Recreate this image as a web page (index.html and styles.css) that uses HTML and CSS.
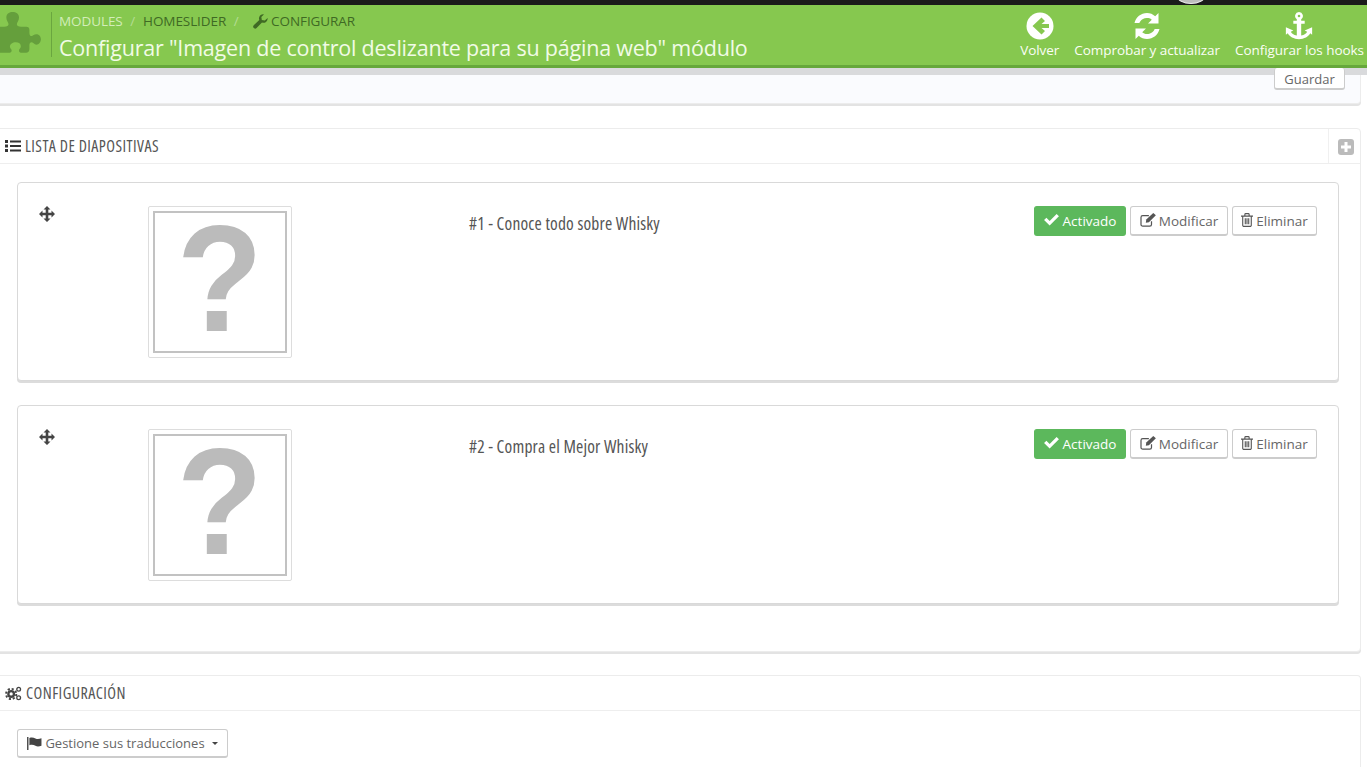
FILE: index.html
```html
<!DOCTYPE html>
<html lang="es">
<head>
<meta charset="utf-8">
<title>Configurar módulo</title>
<link rel="stylesheet" href="styles.css">
</head>
<body>
<div class="topbar"><span class="avatar"></span></div>
<header class="head">
  <div class="puzzle">
    <svg viewBox="0 0 42 44" width="44" height="46"><path fill="#659f3c" d="M-4 14H6C10 14 11 12 9 9 6 3 10 0 14 0s8 3 5 9c-2 3-1 5 3 5h5c2 0 3 1 3 3v3c0 3 2 4 4 2 3-2 7 0 7 4s-4 7-7 4c-2-2-4-1-4 2v3c0 3-1 4-4 4h-3c-3 0-4-2-2-4 2-3 0-6-4-6s-7 3-5 6c2 2 1 4-2 4H-4Z"/></svg>
  </div>
  <div class="titles">
    <div class="crumbs"><span class="light">MODULES</span><span class="sep">/</span><span>HOMESLIDER</span><span class="sep">/</span>
      <svg class="wrench" viewBox="0 0 16 16" width="15" height="15"><path fill="#3f6a24" d="M15.6 4.2c.3 2.3-1 4.3-3 5-1 .4-2.100.3-3-.1L3.800 15a2 2 0 0 1-2.800 0l-.2-.2a2 2 0 0 1 0-2.800L6.700 6.300C6.300 5.300 6.200 4.200 6.700 3.200 7.400 1.200 9.400 0 11.600.4L8.900 3.100l.5 3.200 3.200.5Z"/></svg>
      <span class="conf">CONFIGURAR</span></div>
    <h1>Configurar "Imagen de control deslizante para su página web" módulo</h1>
  </div>
  <nav class="actions">
    <a class="act act-back">
      <svg viewBox="0 0 28 28" width="28" height="28"><circle cx="14" cy="14" r="13.500" fill="#fff"/><path fill="#86c84f" d="M15.500 5.500 19 9l-3.500 3H23v4h-7.500l3.500 3-3.500 3.500L6.500 14Z"/></svg>
      <span>Volver</span></a>
    <a class="act act-sync">
      <svg viewBox="0 0 28 28" width="28" height="28"><path fill="#fff" d="M14 1c3 0 6 1.200 8.200 3.300L25.500 1v10.500H15l3.800-3.800A8 8 0 0 0 6.300 11H1.500C2.800 5.200 7.900 1 14 1ZM2.500 16.500H13l-3.800 3.800A8 8 0 0 0 21.700 17h4.800C25.200 22.800 20.100 27 14 27c-3 0-6-1.200-8.200-3.300L2.500 27Z"/></svg>
      <span>Comprobar y actualizar</span></a>
    <a class="act act-hook">
      <svg viewBox="0 0 32 32" width="32" height="32"><path fill="#fff" d="M16 0a4.500 4.500 0 0 1 2.500 8.200V10h4v3.500h-4v13.300c3.700-.5 6-2.300 6.800-4.300L22.500 21 31 17.500V26l-2.200-1.700C27 28 22 31 16 31S5 28 3.200 24.300L1 26v-8.500L9.500 21l-2.800 1.500c.8 2 3.100 3.800 6.800 4.300V13.500h-4V10h4V8.200A4.500 4.500 0 0 1 16 0Zm0 3a1.500 1.500 0 1 0 0 3 1.500 1.500 0 0 0 0-3Z"/></svg>
      <span>Configurar los hooks</span></a>
  </nav>
</header>
<main class="page">
  <section class="panel panel-top">
    <button class="btn btn-save">Guardar</button>
  </section>

  <section class="panel panel-list">
    <div class="panel-head">
      <svg class="ph-ico" viewBox="0 0 16 12" width="16" height="12"><path fill="#333" d="M0 0h3v3H0ZM5 .5h11v2H5ZM0 4.500h3v3H0ZM5 5h11v2H5ZM0 9h3v3H0ZM5 9.500h11v2H5Z"/></svg>
      <span class="ph-title">LISTA DE DIAPOSITIVAS</span>
      <span class="ph-add"><svg viewBox="0 0 16 16" width="16" height="16"><rect width="16" height="16" rx="3" fill="#bbb"/><path fill="#fff" d="M6.500 3h3v3.500H13v3H9.500V13h-3V9.500H3v-3h3.500Z"/></svg></span>
    </div>
    <article class="slide">
      <svg class="drag" viewBox="0 0 16 16" width="16" height="16"><path fill="#444" d="M8 0l3.500 3.500H9.300v3.200h3.200V4.500L16 8l-3.500 3.500V9.300H9.300v3.200h2.200L8 16l-3.500-3.500h2.200V9.300H3.500v2.200L0 8l3.500-3.500v2.200h3.200V3.500H4.500Z"/></svg>
      <div class="thumb"><div class="thumb-in"><span class="qm">?</span></div></div>
      <h4 class="slide-title">#1 - Conoce todo sobre Whisky</h4>
      <div class="btns">
        <a class="btn btn-on"><svg viewBox="0 0 16 14" width="15" height="13"><path fill="#fff" d="M6 13.500 0 7.500l2.500-2.500L6 8.500 13.500 1 16 3.500Z"/></svg>Activado</a>
        <a class="btn btn-mod"><svg viewBox="0 0 18 16" width="16" height="14"><path fill="none" stroke="#555" stroke-width="1.400" d="M13 9.500V13a2 2 0 0 1-2 2H3a2 2 0 0 1-2-2V5a2 2 0 0 1 2-2h7"/><path fill="#555" d="M15 0l3 2.500L10 10.500l-3.500.5.500-3.500Z"/></svg>Modificar</a>
        <a class="btn btn-del"><svg viewBox="0 0 14 16" width="12" height="14"><path fill="none" stroke="#555" stroke-width="1.300" d="M2 4v10a1.500 1.500 0 0 0 1.500 1.500h7A1.500 1.500 0 0 0 12 14V4M0 3.500h14M4.500 3.500V1.500a1 1 0 0 1 1-1h3a1 1 0 0 1 1 1v2M5 6v7M7 6v7M9 6v7"/></svg>Eliminar</a>
      </div>
    </article>
    <article class="slide">
      <svg class="drag" viewBox="0 0 16 16" width="16" height="16"><path fill="#444" d="M8 0l3.500 3.500H9.300v3.200h3.200V4.500L16 8l-3.500 3.500V9.300H9.300v3.200h2.200L8 16l-3.500-3.500h2.200V9.300H3.500v2.200L0 8l3.500-3.500v2.200h3.200V3.500H4.500Z"/></svg>
      <div class="thumb"><div class="thumb-in"><span class="qm">?</span></div></div>
      <h4 class="slide-title">#2 - Compra el Mejor Whisky</h4>
      <div class="btns">
        <a class="btn btn-on"><svg viewBox="0 0 16 14" width="15" height="13"><path fill="#fff" d="M6 13.500 0 7.500l2.500-2.500L6 8.500 13.500 1 16 3.500Z"/></svg>Activado</a>
        <a class="btn btn-mod"><svg viewBox="0 0 18 16" width="16" height="14"><path fill="none" stroke="#555" stroke-width="1.400" d="M13 9.500V13a2 2 0 0 1-2 2H3a2 2 0 0 1-2-2V5a2 2 0 0 1 2-2h7"/><path fill="#555" d="M15 0l3 2.500L10 10.500l-3.500.5.500-3.500Z"/></svg>Modificar</a>
        <a class="btn btn-del"><svg viewBox="0 0 14 16" width="12" height="14"><path fill="none" stroke="#555" stroke-width="1.300" d="M2 4v10a1.500 1.500 0 0 0 1.500 1.500h7A1.500 1.500 0 0 0 12 14V4M0 3.500h14M4.500 3.500V1.500a1 1 0 0 1 1-1h3a1 1 0 0 1 1 1v2M5 6v7M7 6v7M9 6v7"/></svg>Eliminar</a>
      </div>
    </article>
  </section>

  <section class="panel panel-conf">
    <div class="panel-head">
      <svg class="ph-ico" viewBox="0 0 18 16" width="17" height="15"><circle cx="6.500" cy="8.500" r="3" fill="none" stroke="#444" stroke-width="2.500"/><circle cx="6.500" cy="8.500" r="5.500" fill="none" stroke="#444" stroke-width="2" stroke-dasharray="2.300 2"/><circle cx="14.500" cy="3.500" r="2" fill="none" stroke="#444" stroke-width="1.400"/><circle cx="14.500" cy="12.500" r="2" fill="none" stroke="#444" stroke-width="1.400"/></svg>
      <span class="ph-title">CONFIGURACIÓN</span>
    </div>
    <button class="btn btn-lang"><svg viewBox="0 0 16 14" width="15" height="13"><path fill="#444" d="M0 0h1.500v14H0ZM2.500 1C5 0 7 .5 9 1.500s4 .8 6.500-.2v8c-2.500 1-4.500 1.200-6.500.2s-4-1.500-6.500-.5Z"/></svg>Gestione sus traducciones<span class="caret"></span></button>
  </section>
</main>
</body>
</html>
```

FILE: styles.css
```css
* { box-sizing: border-box; }
html, body { margin: 0; height: 767px; overflow: hidden; background: #fff; }
body { font-family: "Open Sans", "Liberation Sans", sans-serif; color: #555; position: relative; }

.topbar { height: 5px; background: #1b1b1b; position: relative; }
.avatar { position: absolute; left: 1177px; top: -11px; width: 28px; height: 15px; border-radius: 50%; background: #bdbdbd; border: 1px solid #eee; }

.head { position: relative; z-index: 5; height: 63px; background: #86c84f; border-bottom: 3px solid #66a83b; box-shadow: 0 7px 0 #d9dadc; display: flex; align-items: stretch; }
.puzzle { width: 52px; border-right: 1px solid #6aa63f; margin: 7px 0 8px; display: flex; overflow: hidden; }
.puzzle svg { margin-left: -2px; flex: none; }
.titles { padding: 8px 0 0 7px; flex: 1; min-width: 0; }
.crumbs { font-size: 13.500px; line-height: 16px; color: #3f6a24; display: flex; align-items: center; letter-spacing: -0.08px; }
.light { color: #d3edb9; }
.sep { color: #b4dc93; margin: 0 8px 0 7.500px; }
.wrench { margin: 0 3px 0 6.500px; }
.conf { color: #3f6a24; }
.head h1 { margin: 4px 0 0; font-size: 21.500px; line-height: 30px; font-weight: 400; color: #f1fbe6; white-space: nowrap; letter-spacing: -0.21px; }
.actions { display: flex; align-items: flex-start; gap: 15px; padding: 6px 3px 0 0; }
.act { display: flex; flex-direction: column; align-items: center; color: #fbfef6; font-size: 13.500px; line-height: 16px; font-weight: 400; letter-spacing: -0.05px; white-space: nowrap; }
.act svg { height: 30px; display: block; margin-bottom: 1px; padding: 1px 0 1px; }

.page { padding: 0 6px 0 0; }
.panel { background: #fff; border: 1px solid #ececec; border-radius: 4px; box-shadow: 0 2px 0 #e3e3e3; margin-left: -7px; }
.panel-top { height: 36px; background: #fafbfe; padding-right: 15px; display: flex; justify-content: flex-end; align-items: flex-start; margin-bottom: 24px; border-top: 0; }
.panel-list { height: 524px; margin-bottom: 23px; padding: 0 21px 0 23px; }
.panel-conf { height: 120px; padding: 0 0 0 23px; border-bottom: 0; }

.panel-head { display: flex; align-items: center; height: 35px; margin: 0 -21px 18px -23px; padding-left: 11px; border-bottom: 1px solid #eee; position: relative; }
.panel-conf .panel-head { margin: 0 0 18px -23px; }
.ph-ico { flex: none; margin-right: 4px; }
.ph-title { font-family: "Open Sans", sans-serif; font-stretch: 75%; font-size: 16px; color: #555; letter-spacing: 0.45px; }
.ph-add { position: absolute; right: 6px; top: 0; height: 34px; padding: 2px 0 0 9px; border-left: 1px solid #f0f0f0; display: flex; align-items: center; }

.slide { height: 199px; margin-bottom: 24px; border: 1px solid #d9d9d9; border-radius: 4px; box-shadow: 0 2px 0 #dcdcdc; background: #fff; display: flex; align-items: flex-start; padding: 23px 21px 0 21px; }
.drag { flex: none; margin-top: 0; margin-right: 93px; }
.thumb { flex: none; width: 144px; height: 152px; border: 1px solid #ddd; border-radius: 2px; padding: 4px; background: #fff; }
.thumb-in { width: 100%; height: 100%; border: 2px solid #c2c2c2; display: flex; justify-content: center; align-items: center; padding-bottom: 10px; }
.qm { font-family: "Liberation Sans", sans-serif; font-weight: 700; font-size: 153px; line-height: 1; color: #bbb; transform: scaleX(0.92); }
.slide-title { flex: 1; margin: 4px 0 0 177px; font-family: "Open Sans", sans-serif; font-stretch: 75%; font-size: 17.500px; line-height: 26px; font-weight: 400; color: #555; letter-spacing: 0.18px; }
.btns { display: flex; gap: 4px; }
.btn { display: inline-flex; align-items: center; justify-content: center; font-family: "Open Sans", sans-serif; font-size: 13.500px; color: #666; background: #fff; border: 1px solid #ccc; border-bottom-width: 2px; border-radius: 3px; white-space: nowrap; }
.btns .btn { height: 30px; padding-top: 1px; }
.btns .btn svg { margin-top: -3px; }
.btn-on { width: 92px; background: #5cb85c; border-color: #5cb85c; color: #fff; gap: 4px; }
.btn-mod { width: 98px; gap: 3px; }
.btn-del { width: 85px; gap: 3px; }
.btn-save { position: relative; z-index: 6; width: 71px; height: 22px; padding: 1px 0 0; border-top-width: 0; background: #fff; font-size: 13px; }
.btn-lang { height: 29px; width: 211px; padding: 0; gap: 3px; font-size: 13px; }
.caret { width: 0; height: 0; margin-left: 4px; border: 3.500px solid transparent; border-top-color: #444; border-bottom: 0; }
```
